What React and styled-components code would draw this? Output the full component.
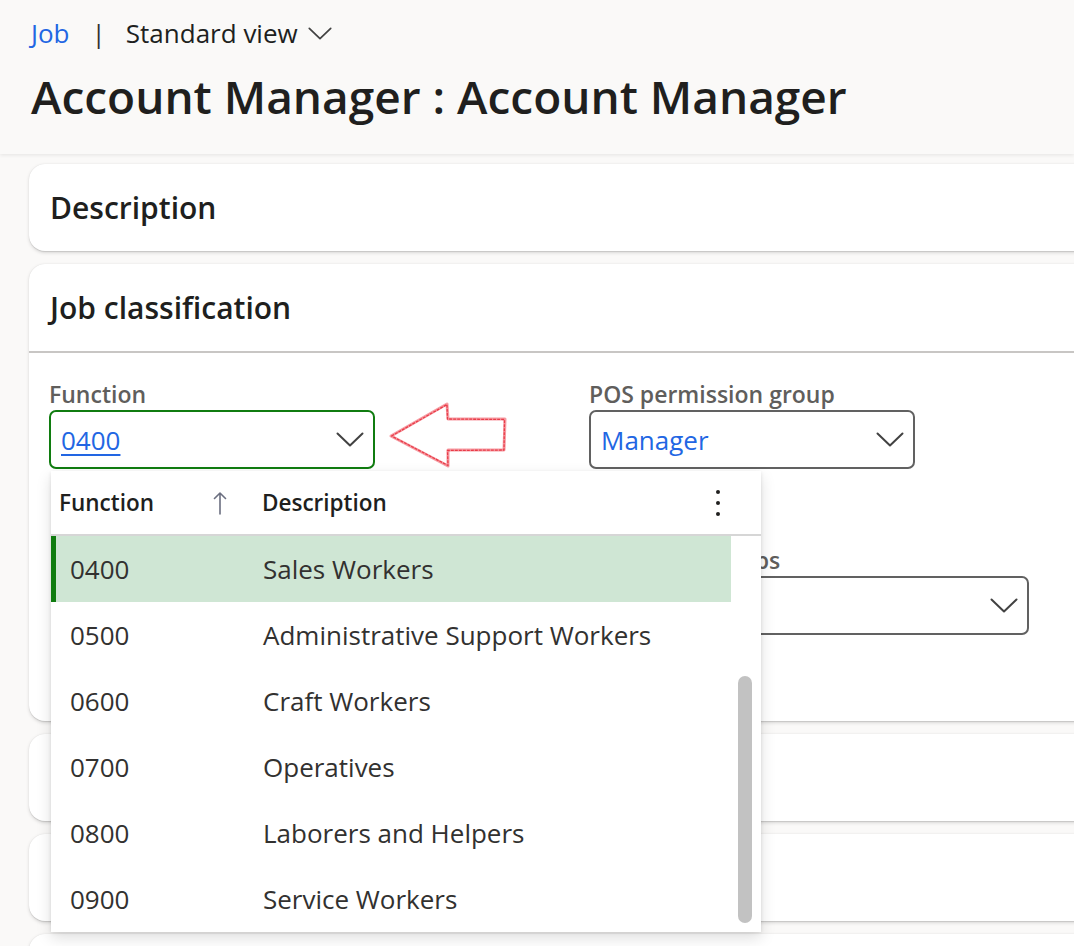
import styled, { createGlobalStyle } from "styled-components";

const GlobalStyle = createGlobalStyle`
  html, body {
    margin: 0;
    padding: 0;
    background: #faf9f8;
    overflow: hidden;
  }
  body {
    font-family: "Open Sans", "Noto Sans", sans-serif;
    color: #201f1e;
  }
`;

const functions = [
  { code: "0400", name: "Sales Workers", selected: true },
  { code: "0500", name: "Administrative Support Workers" },
  { code: "0600", name: "Craft Workers" },
  { code: "0700", name: "Operatives" },
  { code: "0800", name: "Laborers and Helpers" },
  { code: "0900", name: "Service Workers" },
];

const ChevronDown = ({ w = 28, h = 15 }) => (
  <svg width={w} height={h} viewBox="0 0 28 15" fill="none">
    <path d="M1.5 1.5 L14 13.5 L26.5 1.5" stroke="#424242" strokeWidth="2" strokeLinecap="round" strokeLinejoin="round" />
  </svg>
);

const SortUp = () => (
  <svg width="14" height="24" viewBox="0 0 14 24" fill="none">
    <path d="M7 23 V2 M1.5 7.5 L7 2 L12.5 7.5" stroke="#6b6f80" strokeWidth="1.6" strokeLinecap="round" strokeLinejoin="round" />
  </svg>
);

const MoreVertical = () => (
  <svg width="6" height="28" viewBox="0 0 6 28">
    <circle cx="3" cy="3" r="2" fill="#201f1e" />
    <circle cx="3" cy="14" r="2" fill="#201f1e" />
    <circle cx="3" cy="25" r="2" fill="#201f1e" />
  </svg>
);

// hand-drawn looking annotation arrow
const RedArrow = () => (
  <svg width="122" height="70" viewBox="0 0 122 70" fill="none">
    <path
      d="M3 36 L59 4 L60 19 L117 19 L116 50 L60 50 L60 66 Z"
      stroke="#ee4a57"
      strokeWidth="3"
      strokeLinejoin="round"
      opacity="0.55"
    />
    <path
      d="M3.5 36 L59 4.5 L59.5 19 L116.5 19.5 L116 50 L59.5 50.5 L60 65.5 Z"
      stroke="#e8323f"
      strokeWidth="1.3"
      strokeLinejoin="round"
      strokeDasharray="3 1"
      opacity="0.9"
    />
  </svg>
);

export default function App() {
  return (
    <>
      <GlobalStyle />
      <PageHeader>
        <Breadcrumb>
          <Crumb>Job</Crumb>
          <Divider>|</Divider>
          <ViewPicker>
            Standard view
            <ChevronDown w={24} h={13} />
          </ViewPicker>
        </Breadcrumb>
        <Title>Account Manager : Account Manager</Title>
      </PageHeader>

      <Cards>
        <Card>
          <CardHeader>Description</CardHeader>
        </Card>

        <Card>
          <CardHeader divided>Job classification</CardHeader>
          <CardBody>
            <FieldGrid>
              <Field>
                <Label>Function</Label>
                <InputWrap>
                  <Input focused>
                    <LinkValue>0400</LinkValue>
                    <ChevronDown />
                  </Input>
                  <Annotation>
                    <RedArrow />
                  </Annotation>
                  <Dropdown>
                    <DropHeader>
                      <HeadCell width="153px">
                        Function
                        <SortIcon>
                          <SortUp />
                        </SortIcon>
                      </HeadCell>
                      <HeadCell grow>Description</HeadCell>
                      <MoreButton>
                        <MoreVertical />
                      </MoreButton>
                    </DropHeader>
                    <DropList>
                      <Rows>
                        {functions.map((f) => (
                          <Row key={f.code} selected={f.selected}>
                            <CodeCell>{f.code}</CodeCell>
                            <span>{f.name}</span>
                          </Row>
                        ))}
                      </Rows>
                      <Gutter>
                        <Thumb />
                      </Gutter>
                    </DropList>
                  </Dropdown>
                </InputWrap>
              </Field>

              <Field>
                <Label>POS permission group</Label>
                <Input>
                  <Value>Manager</Value>
                  <ChevronDown />
                </Input>
              </Field>

              <Field />

              <Field>
                <Label>Employee groups</Label>
                <Input wide>
                  <Value />
                  <ChevronDown />
                </Input>
              </Field>
            </FieldGrid>
          </CardBody>
        </Card>

        <Card>
          <CardHeader />
        </Card>
        <Card>
          <CardHeader />
        </Card>
        <Card>
          <CardHeader />
        </Card>
      </Cards>
    </>
  );
}

const PageHeader = styled.header`
  padding: 16px 31px 26px;
  box-shadow: 0 1.6px 3.6px rgba(0, 0, 0, 0.08);
`;

const Breadcrumb = styled.div`
  display: flex;
  align-items: center;
  font-size: 26px;
  line-height: 34px;
`;

const Crumb = styled.span`
  color: #2266e3;
`;

const Divider = styled.span`
  margin: 0 20px 0 22px;
  color: #323130;
`;

const ViewPicker = styled.span`
  display: flex;
  align-items: center;
  gap: 10px;
  color: #201f1e;
`;

const Title = styled.h1`
  margin: 14px 0 0;
  font-size: 46px;
  line-height: 64px;
  font-weight: 600;
  color: #201f1e;
`;

const Cards = styled.main`
  display: flex;
  flex-direction: column;
  gap: 13px;
  padding: 10px 0 0 29px;
`;

const Card = styled.section`
  background: #fff;
  border-radius: 16px;
  margin-right: -40px;
  box-shadow: 0 1.6px 3.6px rgba(0, 0, 0, 0.13), 0 0.3px 0.9px rgba(0, 0, 0, 0.11);
`;

const CardHeader = styled.h2`
  margin: 0;
  display: flex;
  align-items: center;
  padding-left: 21px;
  font-size: 30px;
  font-weight: 600;
  color: #201f1e;
  border-bottom: ${(p) => (p.divided ? "2px solid #c8c6c4" : "none")};
  box-sizing: border-box;
  height: ${(p) => (p.divided ? "89px" : "87px")};
`;

const CardBody = styled.div`
  padding: 26px 20px 86px;
`;

const FieldGrid = styled.div`
  display: grid;
  grid-template-columns: 540px 540px;
  row-gap: 76px;
`;

const Field = styled.div`
  display: flex;
  flex-direction: column;
`;

const Label = styled.label`
  font-size: 23px;
  line-height: 30px;
  font-weight: 600;
  color: #605e5c;
  margin-bottom: 1px;
`;

const InputWrap = styled.div`
  position: relative;
  width: 326px;
`;

const Input = styled.div`
  box-sizing: border-box;
  width: ${(p) => (p.wide ? "440px" : "326px")};
  height: 59px;
  display: flex;
  align-items: center;
  justify-content: space-between;
  padding: 0 9px 0 10px;
  border: 2px solid ${(p) => (p.focused ? "#107c10" : "#616161")};
  border-radius: 7px;
  background: #fff;
`;

const Value = styled.span`
  font-size: 26px;
  color: #2266e3;
`;

const LinkValue = styled(Value)`
  text-decoration: underline;
  text-underline-offset: 4px;
  text-decoration-thickness: 1.5px;
`;

const Annotation = styled.div`
  position: absolute;
  left: 339px;
  top: -10px;
`;

const Dropdown = styled.div`
  position: absolute;
  z-index: 5;
  top: 61px;
  left: 2px;
  width: 710px;
  background: #fff;
  box-shadow: 0 6.4px 14.4px rgba(0, 0, 0, 0.13), 0 1.2px 3.6px rgba(0, 0, 0, 0.11);
`;

const DropHeader = styled.div`
  height: 63px;
  display: flex;
  align-items: center;
  padding-left: 8px;
  border-bottom: 2px solid #d6d6d6;
`;

const HeadCell = styled.div`
  display: flex;
  align-items: center;
  justify-content: space-between;
  width: ${(p) => p.width || "auto"};
  flex: ${(p) => (p.grow ? 1 : "none")};
  padding-right: ${(p) => (p.grow ? 0 : "50px")};
  font-size: 22.5px;
  font-weight: 600;
  color: #201f1e;
`;

const SortIcon = styled.span`
  display: flex;
  margin-right: -15px;
`;

const MoreButton = styled.span`
  display: flex;
  width: 46px;
  justify-content: flex-start;
`;

const DropList = styled.div`
  display: flex;
`;

const Rows = styled.div`
  width: 680px;
`;

const Row = styled.div`
  height: 66px;
  box-sizing: border-box;
  display: flex;
  align-items: center;
  padding-left: ${(p) => (p.selected ? "14px" : "19px")};
  border-left: ${(p) => (p.selected ? "5px solid #107c10" : "none")};
  background: ${(p) => (p.selected ? "#cfe6d4" : "transparent")};
  font-size: 26px;
  color: #323130;
`;

const CodeCell = styled.span`
  width: 193px;
`;

const Gutter = styled.div`
  width: 30px;
  padding: 140px 0 0 7px;
  box-sizing: border-box;
`;

const Thumb = styled.div`
  width: 14px;
  height: 247px;
  border-radius: 7px;
  background: #c2c2c2;
`;
